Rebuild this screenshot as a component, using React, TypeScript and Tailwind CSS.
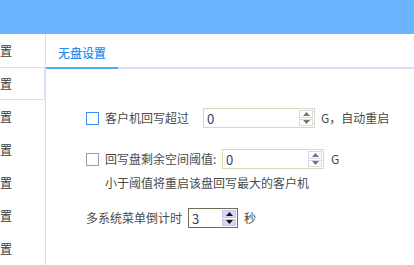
import React from "react";

const menu = ["常规设置", "无盘设置", "网络设置", "显示设置", "安全设置", "系统设置", "高级设置"];

function Spinner({ dark }: { dark?: boolean }) {
  const box = dark
    ? "flex-1 flex items-center justify-center bg-[#d6d6f4] border border-[#c8c8ee]"
    : "flex-1 flex items-center justify-center bg-white border border-[#d6d6f6]";
  const fill = dark ? "#111" : "#77775a";
  return (
    <div className="flex flex-col w-[14px] h-full gap-px">
      <div className={box}>
        <svg width="7" height="4" viewBox="0 0 7 4">
          <path d="M3.5 0L7 4H0z" fill={fill} />
        </svg>
      </div>
      <div className={box}>
        <svg width="7" height="4" viewBox="0 0 7 4">
          <path d="M0 0h7L3.5 4z" fill={fill} />
        </svg>
      </div>
    </div>
  );
}

function NumInput({ value, width, dark }: { value: string; width: string; dark?: boolean }) {
  return (
    <div
      className={`${width} h-[20px] flex items-stretch border ${
        dark ? "border-[#6e6e56]" : "border-[#dadab0]"
      } bg-white py-px pr-px`}
    >
      <span className="flex-1 pl-[3px] text-[13px] leading-[17px] text-[#3a3a6a]">{value}</span>
      <Spinner dark={dark} />
    </div>
  );
}

function Check({ blue }: { blue?: boolean }) {
  return (
    <span
      className={`w-[13px] h-[13px] border ${blue ? "border-[#3d8fe8]" : "border-[#9c9aae]"} bg-white`}
    />
  );
}

export default function App() {
  return (
    <div
      className="w-[414px] h-[265px] overflow-hidden bg-white flex flex-col text-[12px] text-[#4a4a4a]"
      style={{ fontFamily: '"Noto Sans CJK SC", "Noto Sans", sans-serif' }}
    >
      <div className="h-[34px] bg-[#6cb4ff] shrink-0" />
      <div className="flex flex-1">
        <div className="w-[46px] shrink-0 border-r border-[#dcdcf6] overflow-hidden">
          {menu.map((m, i) => (
            <div
              key={m}
              className={`h-[33px] w-[45px] flex items-center ${
                i === 1 ? "border-y border-r border-[#dcdcf6]" : ""
              }`}
            >
              <div className="w-[12px] flex justify-end whitespace-nowrap text-[12px] text-[#3c3c3c]">
                {m}
              </div>
            </div>
          ))}
        </div>
        <div className="flex-1 flex flex-col">
          <div className="h-[35px] flex items-end border-b-2 border-[#dcdcf8]">
            <div className="px-3 pb-[5px] mb-[-2px] border-b-2 border-[#4aaef2] text-[12px] text-[#2b8ff0] font-medium">
              无盘设置
            </div>
          </div>
          <div className="pl-[40px] pt-[39px] flex flex-col">
            <div className="flex items-center h-[20px]">
              <Check blue />
              <span className="ml-[6px] w-[98px]">客户机回写超过</span>
              <NumInput value="0" width="w-[112px]" />
              <span className="ml-[6px]">G，自动重启</span>
            </div>
            <div className="flex items-center h-[20px] mt-[21px]">
              <Check />
              <span className="ml-[6px] w-[117px]">回写盘剩余空间阈值:</span>
              <NumInput value="0" width="w-[102px]" />
              <span className="ml-[7px]">G</span>
            </div>
            <div className="ml-[19px] mt-[6px] leading-[16px]">小于阈值将重启该盘回写最大的客户机</div>
            <div className="flex items-center h-[20px] mt-[17px]">
              <span className="w-[102px]">多系统菜单倒计时</span>
              <NumInput value="3" width="w-[50px]" dark />
              <span className="ml-[6px]">秒</span>
            </div>
          </div>
        </div>
      </div>
    </div>
  );
}
